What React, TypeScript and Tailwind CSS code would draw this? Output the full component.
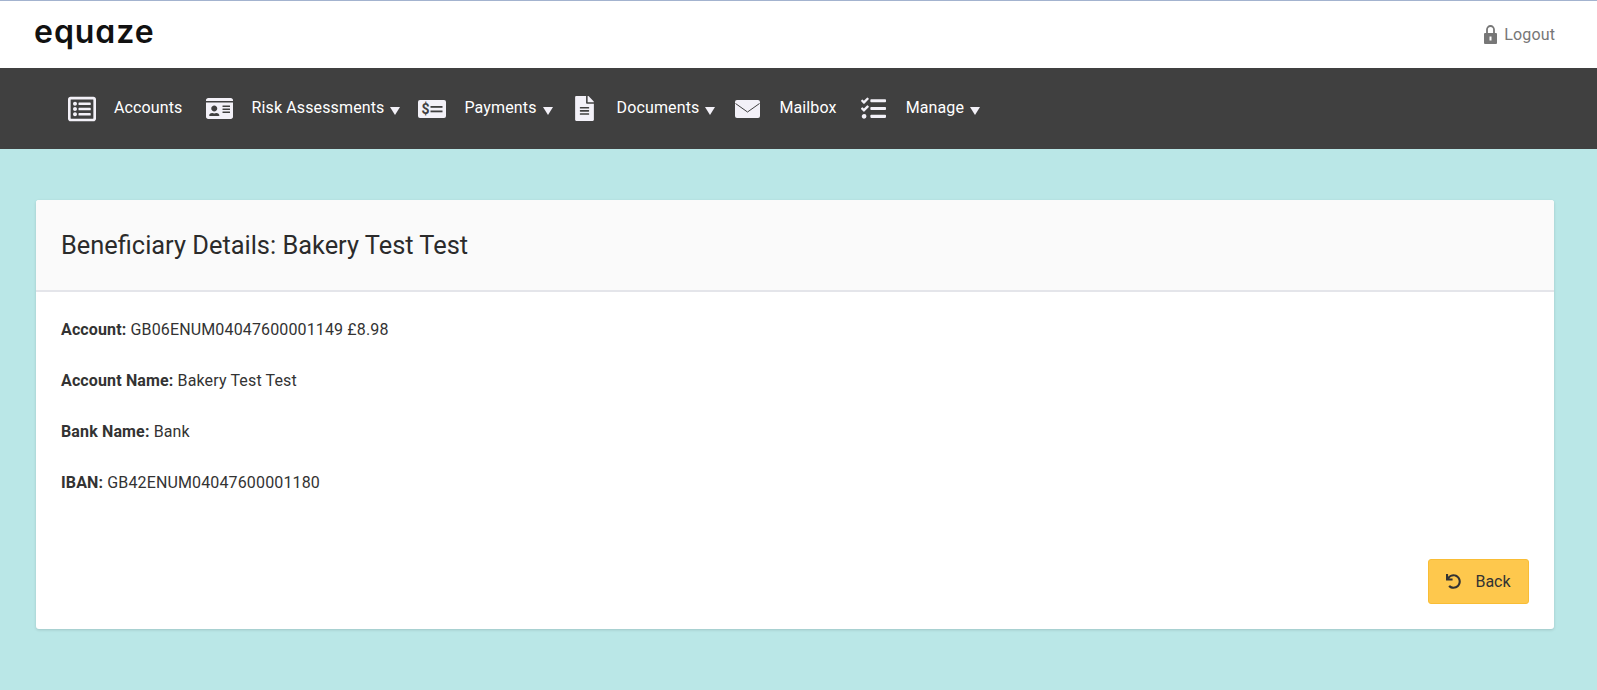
import { FaFileAlt, FaIdCard, FaRegListAlt, FaTasks, FaUndo } from "react-icons/fa"
import type { ComponentType } from "react"

function MoneyIcon() {
  return (
    <svg width="28" height="18" viewBox="0 0 28 18">
      <rect width="28" height="18" rx="2" fill="currentColor" />
      <text x="3.5" y="14" fontFamily="Roboto, sans-serif" fontSize="14" fontWeight="700" fill="#404040">
        $
      </text>
      <rect x="12.5" y="6" width="12" height="1.8" fill="#404040" />
      <rect x="12.5" y="10.5" width="12" height="1.8" fill="#404040" />
    </svg>
  )
}

function MailIcon() {
  return (
    <svg width="25" height="18" viewBox="0 0 25 18">
      <rect width="25" height="18" rx="2" fill="currentColor" />
      <path d="M0.5 3.5 L12.5 12 L24.5 3.5" fill="none" stroke="#404040" strokeWidth="1" />
    </svg>
  )
}

function LockIcon() {
  return (
    <svg width="13" height="19" viewBox="0 0 13 19">
      <path d="M3 9V4.5a3.5 3.5 0 0 1 7 0V9" fill="none" stroke="currentColor" strokeWidth="1.8" />
      <rect y="8" width="13" height="11" rx="1" fill="currentColor" />
      <rect x="5.5" y="11.5" width="2" height="4" fill="#fff" />
    </svg>
  )
}

const navItems: { label: string; icon: ComponentType; caret?: boolean }[] = [
  { label: "Accounts", icon: () => <FaRegListAlt size={28} /> },
  { label: "Risk Assessments", icon: () => <FaIdCard size={27} />, caret: true },
  { label: "Payments", icon: MoneyIcon, caret: true },
  { label: "Documents", icon: () => <FaFileAlt size={25} />, caret: true },
  { label: "Mailbox", icon: MailIcon },
  { label: "Manage", icon: () => <FaTasks size={25} />, caret: true },
]

const details = [
  { label: "Account:", value: "GB06ENUM04047600001149 £8.98" },
  { label: "Account Name:", value: "Bakery Test Test" },
  { label: "Bank Name:", value: "Bank" },
  { label: "IBAN:", value: "GB42ENUM04047600001180" },
]

function NavItem({ label, icon: Icon, caret }: (typeof navItems)[number]) {
  return (
    <a className={`flex items-center text-white ${caret ? "mr-[18px]" : "mr-[23px]"}`}>
      <span className="flex w-7 justify-center text-[#f3f1f8]">
        <Icon />
      </span>
      <span className="mb-[2px] ml-[18px] text-[16px] leading-6 tracking-[0.13px]">{label}</span>
      <span className={caret ? "ml-[6px] mt-[4px] h-0 w-0 border-x-[5.5px] border-t-[8px] border-x-transparent border-t-[#f3f1f8]" : "hidden"} />
    </a>
  )
}

export default function App() {
  return (
    <div className="min-h-[690px] bg-[#bae7e7] font-['Roboto',sans-serif] text-[#333]">
      <header className="flex h-[68px] items-center justify-between border-t border-[#a3b3cf] bg-white pl-[34px] pr-[42px]">
        <span className="mb-[6px] font-['Inter',sans-serif] text-[32px] font-semibold leading-none tracking-[0.03em] text-[#111] [font-feature-settings:'cv11']">
          equaze
        </span>
        <a className="flex items-center gap-[7px] text-[16px] tracking-[0.13px] text-[#777]">
          <LockIcon />
          Logout
        </a>
      </header>

      <nav className="flex h-[81px] items-center bg-[#404040] pl-[68px]">
        {navItems.map((item) => (
          <NavItem key={item.label} {...item} />
        ))}
      </nav>

      <main className="pb-[61px] pl-[36px] pr-[43px] pt-[51px]">
        <section className="overflow-hidden rounded-[3px] bg-white shadow-[0_1px_3px_rgba(0,0,0,0.15)]">
          <div className="flex h-[92px] items-center border-b-2 border-[#e4e5ea] bg-[#fafafa] px-[25px]">
            <h1 className="text-[25.4px] font-normal leading-8 text-[#2b2b2b]">Beneficiary Details: Bakery Test Test</h1>
          </div>

          <div className="px-[25px] pt-[27px]">
            {details.map((row) => (
              <p key={row.label} className="mb-[30px] h-[21px] text-[16px] leading-[21px] tracking-[0.14px]">
                <strong className="font-bold">{row.label}</strong> {row.value}
              </p>
            ))}
          </div>

          <div className="flex justify-end px-[25px] pb-[25px] pt-[36px]">
            <button className="flex h-[45px] w-[101px] items-center justify-center gap-[14px] rounded-[3px] border border-[#f9bd35] bg-[#fec84d] text-[16px] text-[#333]">
              <FaUndo size={15} />
              Back
            </button>
          </div>
        </section>
      </main>
    </div>
  )
}
